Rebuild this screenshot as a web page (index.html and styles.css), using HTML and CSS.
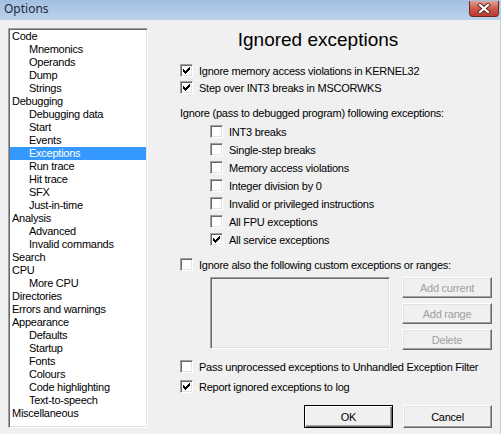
FILE: index.html
```html
<!DOCTYPE html>
<html lang="en">
<head>
    <meta charset="UTF-8">
    <title>Options</title>
    <link rel="stylesheet" href="styles.css">
</head>
<body>
    <div class="window">
        <div class="titlebar">
            <span class="title">Options</span>
            <span class="close">
                <svg width="14" height="11" viewBox="0 0 14 11">
                    <path d="M3 2 L11 9 M11 2 L3 9" stroke="#5a2620" stroke-width="4" stroke-linecap="square"/>
                    <path d="M3 2 L11 9 M11 2 L3 9" stroke="#fff" stroke-width="2.2" stroke-linecap="square"/>
                </svg>
            </span>
        </div>
        <div class="client">
            <ul class="tree">
                <li>Code</li>
                <li class="sub">Mnemonics</li>
                <li class="sub">Operands</li>
                <li class="sub">Dump</li>
                <li class="sub">Strings</li>
                <li>Debugging</li>
                <li class="sub">Debugging data</li>
                <li class="sub">Start</li>
                <li class="sub">Events</li>
                <li class="sub selected">Exceptions</li>
                <li class="sub">Run trace</li>
                <li class="sub">Hit trace</li>
                <li class="sub">SFX</li>
                <li class="sub">Just-in-time</li>
                <li>Analysis</li>
                <li class="sub">Advanced</li>
                <li class="sub">Invalid commands</li>
                <li>Search</li>
                <li>CPU</li>
                <li class="sub">More CPU</li>
                <li>Directories</li>
                <li>Errors and warnings</li>
                <li>Appearance</li>
                <li class="sub">Defaults</li>
                <li class="sub">Startup</li>
                <li class="sub">Fonts</li>
                <li class="sub">Colours</li>
                <li class="sub">Code highlighting</li>
                <li class="sub">Text-to-speech</li>
                <li>Miscellaneous</li>
            </ul>

            <div class="panel">
                <h1 class="heading">Ignored exceptions</h1>
                <div class="body">
                    <label class="opt first"><span class="box"><svg width="9" height="9" viewBox="0 0 9 9" shape-rendering="crispEdges"><path d="M1 3 L1 6 L3 8 L8 3 L8 0 L3 5 Z" fill="#000"/></svg></span>Ignore memory access violations in KERNEL32</label>
                    <label class="opt"><span class="box"><svg width="9" height="9" viewBox="0 0 9 9" shape-rendering="crispEdges"><path d="M1 3 L1 6 L3 8 L8 3 L8 0 L3 5 Z" fill="#000"/></svg></span>Step over INT3 breaks in MSCORWKS</label>
                    <div class="caption">Ignore (pass to debugged program) following exceptions:</div>

                    <div class="group">
                        <label class="opt"><span class="box"></span>INT3 breaks</label>
                        <label class="opt"><span class="box"></span>Single-step breaks</label>
                        <label class="opt"><span class="box"></span>Memory access violations</label>
                        <label class="opt"><span class="box"></span>Integer division by 0</label>
                        <label class="opt"><span class="box"></span>Invalid or privileged instructions</label>
                        <label class="opt"><span class="box"></span>All FPU exceptions</label>
                        <label class="opt"><span class="box"><svg width="9" height="9" viewBox="0 0 9 9" shape-rendering="crispEdges"><path d="M1 3 L1 6 L3 8 L8 3 L8 0 L3 5 Z" fill="#000"/></svg></span>All service exceptions</label>
                    </div>

                    <label class="opt custom-opt"><span class="box"></span>Ignore also the following custom exceptions or ranges:</label>
                    <div class="custom">
                        <div class="listbox"></div>
                        <div class="side-buttons">
                            <button class="btn" disabled>Add current</button>
                            <button class="btn" disabled>Add range</button>
                            <button class="btn" disabled>Delete</button>
                        </div>
                    </div>

                    <label class="opt pass-opt"><span class="box"></span>Pass unprocessed exceptions to Unhandled Exception Filter</label>
                    <label class="opt report-opt"><span class="box"><svg width="9" height="9" viewBox="0 0 9 9" shape-rendering="crispEdges"><path d="M1 3 L1 6 L3 8 L8 3 L8 0 L3 5 Z" fill="#000"/></svg></span>Report ignored exceptions to log</label>

                    <div class="actions">
                        <button class="btn default">OK</button>
                        <button class="btn">Cancel</button>
                    </div>
                </div>
            </div>
        </div>
    </div>
</body>
</html>
```

FILE: styles.css
```css
body {
    margin: 0;
    font-family: "Liberation Sans", Arial, sans-serif;
    font-size: 11px;
    letter-spacing: -0.25px;
    color: #000;
    background-color: #f0f0f0;
}

.window {
    width: 500px;
    height: 434px;
    border-right: 1px solid #b9d1ea;
    display: flex;
    flex-direction: column;
}

.titlebar {
    height: 20px;
    display: flex;
    align-items: flex-start;
    background: linear-gradient(#a3bfe0, #bcd3ec);
}

.title {
    font-family: "Noto Sans", sans-serif;
    font-size: 12px;
    letter-spacing: 0;
    line-height: 17px;
    padding-left: 4px;
    color: #1e2a3a;
}

.close {
    margin-left: auto;
    margin-right: 1px;
    margin-top: 1px;
    width: 30px;
    height: 16px;
    display: flex;
    align-items: center;
    justify-content: center;
    background: linear-gradient(#e2a196, #cd5a4c 50%, #bd3b2e);
    border: 1px solid #6e2a22;
    border-top: none;
    border-radius: 0 0 4px 4px;
    box-sizing: border-box;
}

.client {
    flex: 1;
    display: flex;
    background-color: #f0f0f0;
}

.tree {
    list-style: none;
    margin: 8px 0 0 8px;
    padding: 1px 0 0 0;
    width: 140px;
    height: 400px;
    box-sizing: border-box;
    background-color: #fff;
    border-top: 1px solid #a0a0a0;
    border-left: 1px solid #a0a0a0;
    border-right: 1px solid #fff;
    border-bottom: 1px solid #fff;
    box-shadow: inset 1px 1px #696969, inset -1px -1px #e3e3e3;
}

.tree li {
    height: 13px;
    line-height: 13px;
    padding-left: 2px;
    margin-left: 1px;
    margin-right: 1px;
    white-space: nowrap;
}

.tree li.sub {
    padding-left: 19px;
}

.tree li.selected {
    background-color: #3399ff;
    color: #fff;
}

.panel {
    flex: 1;
    padding: 8px 8px 0 0;
}

.heading {
    margin: 0 4px 0 0;
    font-size: 19px;
    font-weight: normal;
    letter-spacing: 0;
    line-height: 24px;
    text-align: center;
}

.body {
    padding-left: 32px;
    display: flex;
    flex-direction: column;
}

.opt {
    display: flex;
    align-items: center;
    gap: 6px;
    height: 17px;
    white-space: nowrap;
}

.opt.first {
    margin-top: 10px;
}

.box {
    width: 13px;
    height: 13px;
    box-sizing: border-box;
    background-color: #fff;
    border-top: 1px solid #a0a0a0;
    border-left: 1px solid #a0a0a0;
    border-right: 1px solid #fff;
    border-bottom: 1px solid #fff;
    box-shadow: inset 1px 1px #696969, inset -1px -1px #e3e3e3;
    display: flex;
    align-items: center;
    justify-content: center;
    flex-shrink: 0;
}

.caption {
    margin-top: 9px;
    height: 17px;
    line-height: 17px;
}

.group {
    margin-top: 1px;
    padding-left: 30px;
    display: flex;
    flex-direction: column;
    gap: 1px;
}

.custom-opt {
    margin-top: 8px;
}

.custom {
    margin-top: 4px;
    padding-left: 30px;
    display: flex;
    justify-content: space-between;
}

.listbox {
    width: 180px;
    height: 72px;
    box-sizing: border-box;
    border-top: 1px solid #a0a0a0;
    border-left: 1px solid #a0a0a0;
    border-right: 1px solid #fff;
    border-bottom: 1px solid #fff;
    box-shadow: inset 1px 1px #696969, inset -1px -1px #e3e3e3;
}

.side-buttons {
    display: flex;
    flex-direction: column;
    gap: 5px;
}

.btn {
    width: 90px;
    height: 21px;
    padding: 0;
    font-family: "Liberation Sans", Arial, sans-serif;
    font-size: 11px;
    letter-spacing: -0.25px;
    color: #000;
    background-color: #f0f0f0;
    border: 1px solid;
    border-color: #fff #696969 #696969 #fff;
    box-shadow: inset -1px -1px #a0a0a0, inset 1px 1px #e3e3e3;
    border-radius: 0;
}

.btn:disabled {
    color: #a0a0a0;
}

.pass-opt {
    margin-top: 8px;
}

.report-opt {
    margin-top: 3px;
}

.actions {
    margin-top: 10px;
    display: flex;
    justify-content: flex-end;
    gap: 10px;
}

.actions .btn {
    width: 89px;
    height: 23px;
}

.btn.default {
    border-color: #000;
    box-shadow: inset 1px 1px #fff, inset -1px -1px #696969, inset -2px -2px #a0a0a0;
}
```
